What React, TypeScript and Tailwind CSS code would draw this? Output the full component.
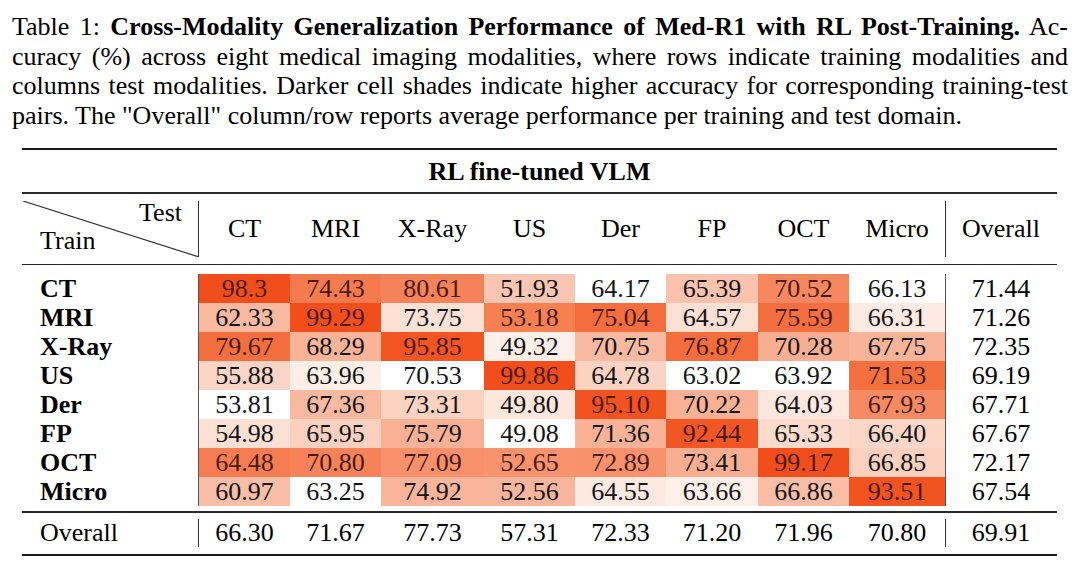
import React from "react";

type Cell = { v: string; c: string; dark?: boolean };

const W = "#ffffff";
const rows: { name: string; cells: Cell[]; overall: string }[] = [
  {
    name: "CT",
    overall: "71.44",
    cells: [
      { v: "98.3", c: "#f24e1b", dark: true },
      { v: "74.43", c: "#f57a4d", dark: true },
      { v: "80.61", c: "#f68259", dark: true },
      { v: "51.93", c: "#fbc6b1" },
      { v: "64.17", c: W },
      { v: "65.39", c: "#fbc3ad" },
      { v: "70.52", c: "#f6875f", dark: true },
      { v: "66.13", c: W },
    ],
  },
  {
    name: "MRI",
    overall: "71.26",
    cells: [
      { v: "62.33", c: "#f9b9a1" },
      { v: "99.29", c: "#f24e1b", dark: true },
      { v: "73.75", c: "#fde1d5" },
      { v: "53.18", c: "#f6804f", dark: true },
      { v: "75.04", c: "#f46d3c", dark: true },
      { v: "64.57", c: "#fde0d4" },
      { v: "75.59", c: "#f46f3f", dark: true },
      { v: "66.31", c: "#fdebe3" },
    ],
  },
  {
    name: "X-Ray",
    overall: "72.35",
    cells: [
      { v: "79.67", c: "#f46f3e", dark: true },
      { v: "68.29", c: "#f9b397" },
      { v: "95.85", c: "#f25522", dark: true },
      { v: "49.32", c: "#feefe8" },
      { v: "70.75", c: "#fab9a1" },
      { v: "76.87", c: "#f46e3d", dark: true },
      { v: "70.28", c: "#f9ae92" },
      { v: "67.75", c: "#f9b399" },
    ],
  },
  {
    name: "US",
    overall: "69.19",
    cells: [
      { v: "55.88", c: "#fcd5c6" },
      { v: "63.96", c: "#feefe8" },
      { v: "70.53", c: W },
      { v: "99.86", c: "#f24e1b", dark: true },
      { v: "64.78", c: "#fcd3c3" },
      { v: "63.02", c: W },
      { v: "63.92", c: W },
      { v: "71.53", c: "#f4703f", dark: true },
    ],
  },
  {
    name: "Der",
    overall: "67.71",
    cells: [
      { v: "53.81", c: W },
      { v: "67.36", c: "#f9b9a0" },
      { v: "73.31", c: "#fcd2c1" },
      { v: "49.80", c: "#fde6dc" },
      { v: "95.10", c: "#f2531f", dark: true },
      { v: "70.22", c: "#f9b095" },
      { v: "64.03", c: "#fee7de" },
      { v: "67.93", c: "#f68a63", dark: true },
    ],
  },
  {
    name: "FP",
    overall: "67.67",
    cells: [
      { v: "54.98", c: "#fde0d4" },
      { v: "65.95", c: "#fcd0bf" },
      { v: "75.79", c: "#f9b094" },
      { v: "49.08", c: W },
      { v: "71.36", c: "#f9b296" },
      { v: "92.44", c: "#f25622", dark: true },
      { v: "65.33", c: "#fcdacc" },
      { v: "66.40", c: "#fcd6c6" },
    ],
  },
  {
    name: "OCT",
    overall: "72.17",
    cells: [
      { v: "64.48", c: "#f67d52", dark: true },
      { v: "70.80", c: "#f6825a", dark: true },
      { v: "77.09", c: "#f7906b", dark: true },
      { v: "52.65", c: "#f8936e", dark: true },
      { v: "72.89", c: "#f8926c", dark: true },
      { v: "73.41", c: "#f9ad91" },
      { v: "99.17", c: "#f24e1b", dark: true },
      { v: "66.85", c: "#fcd0be" },
    ],
  },
  {
    name: "Micro",
    overall: "67.54",
    cells: [
      { v: "60.97", c: "#fabda6" },
      { v: "63.25", c: W },
      { v: "74.92", c: "#f9b49a" },
      { v: "52.56", c: "#f9b59b" },
      { v: "64.55", c: "#fde9e0" },
      { v: "63.66", c: "#feefe9" },
      { v: "66.86", c: "#f9bda6" },
      { v: "93.51", c: "#f2531f", dark: true },
    ],
  },
];

const cols = ["CT", "MRI", "X-Ray", "US", "Der", "FP", "OCT", "Micro"];
const overallRow = ["66.30", "71.67", "77.73", "57.31", "72.33", "71.20", "71.96", "70.80"];

const grid =
  "grid grid-cols-[177px_91px_91px_103px_91px_91px_92px_91px_97px_110px]";

export default function App() {
  return (
    <div className="w-[1080px] h-[563px] bg-white text-black overflow-hidden font-['Liberation_Serif']">
      <div className="px-[12px] pt-[12px] text-[26px] leading-[29.5px]">
        <div className="text-justify [text-align-last:justify] whitespace-nowrap">
          Table 1: <b>Cross-Modality Generalization Performance of Med-R1 with RL Post-Training.</b> Ac-
        </div>
        <div className="text-justify [text-align-last:justify] whitespace-nowrap">
          curacy (%) across eight medical imaging modalities, where rows indicate training modalities and
        </div>
        <div className="text-justify [text-align-last:justify] whitespace-nowrap">
          columns test modalities. Darker cell shades indicate higher accuracy for corresponding training-test
        </div>
        <div className="whitespace-nowrap">
          pairs. The "Overall" column/row reports average performance per training and test domain.
        </div>
      </div>

      <div className="ml-[22px] mt-[18px] w-[1035px] text-[26px]">
        <div className="h-[2px] bg-[#1a1a1a]" />
        <div className="h-[42px] flex items-center justify-center font-bold">RL fine-tuned VLM</div>
        <div className="h-[1.5px] bg-[#2a2a2a]" />

        <div className={`${grid} h-[70px] items-center`}>
          <div className="relative h-[56px] border-r border-[#333]">
            <svg className="absolute inset-0" width="177" height="56" viewBox="0 0 177 56">
              <line x1="1" y1="0" x2="177" y2="56" stroke="#333" strokeWidth="1.2" />
            </svg>
            <span className="absolute right-[16px] top-[-3px] leading-[30px]">Test</span>
            <span className="absolute left-[18px] top-[25px] leading-[30px]">Train</span>
          </div>
          {cols.map((c, i) => (
            <div
              key={c}
              className={`h-[56px] flex items-center justify-center ${i === 7 ? "border-r border-[#333]" : ""}`}
            >
              {c}
            </div>
          ))}
          <div className="h-[56px] flex items-center justify-center">Overall</div>
        </div>
        <div className="h-[1.5px] bg-[#2a2a2a]" />

        <div className="pt-[9px] pb-[5px]">
          {rows.map((r) => (
            <div key={r.name} className={`${grid} h-[29px] leading-[29px]`}>
              <div className="pl-[18px] font-bold border-r border-[#555]">{r.name}</div>
              {r.cells.map((cell, i) => (
                <div
                  key={i}
                  className={`text-center ${cell.dark ? "text-[#4a1a0c]" : "text-[#141414]"} ${i === 7 ? "border-r border-[#555]" : ""}`}
                  style={{ backgroundColor: cell.c }}
                >
                  {cell.v}
                </div>
              ))}
              <div className="text-center">{r.overall}</div>
            </div>
          ))}
        </div>
        <div className="h-[1.5px] bg-[#2a2a2a]" />

        <div className={`${grid} h-[41px] items-center`}>
          <div className="h-[28px] leading-[28px] pl-[18px] border-r border-[#333]">Overall</div>
          {overallRow.map((v, i) => (
            <div
              key={i}
              className={`h-[28px] leading-[28px] text-center ${i === 7 ? "border-r border-[#333]" : ""}`}
            >
              {v}
            </div>
          ))}
          <div className="h-[28px] leading-[28px] text-center">69.91</div>
        </div>
        <div className="h-[2px] bg-[#1a1a1a]" />
      </div>
    </div>
  );
}
